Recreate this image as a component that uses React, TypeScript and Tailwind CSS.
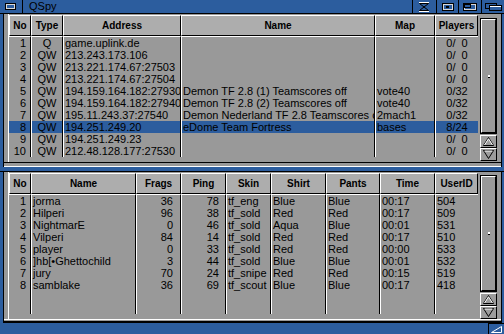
import React from "react"

type Col = { title: string; w: string; cell: string }

const serverCols: Col[] = [
  { title: "No", w: "w-[22px]", cell: "text-right pr-[4px]" },
  { title: "Type", w: "w-[32px]", cell: "text-center" },
  { title: "Address", w: "w-[118px]", cell: "pl-[1px]" },
  { title: "Name", w: "w-[194px]", cell: "pl-[1px]" },
  { title: "Map", w: "w-[60px]", cell: "pl-[1px]" },
  { title: "Players", w: "w-[43px]", cell: "text-center" },
]

const F = "\u2007"

const servers: string[][] = [
  ["1", "Q", "game.uplink.de", "", "", `0/${F}0`],
  ["2", "QW", "213.243.173.106", "", "", `0/${F}0`],
  ["3", "QW", "213.221.174.67:27503", "", "", `0/${F}0`],
  ["4", "QW", "213.221.174.67:27504", "", "", `0/${F}0`],
  ["5", "QW", "194.159.164.182:27930", "Demon TF 2.8 (1) Teamscores off", "vote40", "0/32"],
  ["6", "QW", "194.159.164.182:27940", "Demon TF 2.8 (2) Teamscores off", "vote40", "0/32"],
  ["7", "QW", "195.11.243.37:27540", "Demon Nederland TF 2.8 Teamscores off", "2mach1", "0/32"],
  ["8", "QW", "194.251.249.20", "eDome Team Fortress", "bases", "8/24"],
  ["9", "QW", "194.251.249.23", "", "", `0/${F}0`],
  ["10", "QW", "212.48.128.177:27530", "", "", `0/${F}0`],
]

const playerCols: Col[] = [
  { title: "No", w: "w-[22px]", cell: "text-right pr-[4px]" },
  { title: "Name", w: "w-[105px]", cell: "pl-[1px]" },
  { title: "Frags", w: "w-[45px]", cell: "text-right pr-[7px]" },
  { title: "Ping", w: "w-[45px]", cell: "text-right pr-[6px]" },
  { title: "Skin", w: "w-[45px]", cell: "pl-[1px]" },
  { title: "Shirt", w: "w-[55px]", cell: "pl-[1px]" },
  { title: "Pants", w: "w-[54px]", cell: "pl-[1px]" },
  { title: "Time", w: "w-[55px]", cell: "pl-[1px]" },
  { title: "UserID", w: "w-[43px]", cell: "pl-[1px]" },
]

const players: string[][] = [
  ["1", "jorma", "36", "78", "tf_eng", "Blue", "Blue", "00:17", "504"],
  ["2", "Hilperi", "96", "38", "tf_sold", "Red", "Red", "00:17", "509"],
  ["3", "NightmarE", "0", "46", "tf_sold", "Aqua", "Blue", "00:01", "531"],
  ["4", "Vilperi", "84", "14", "tf_sold", "Red", "Red", "00:17", "510"],
  ["5", "player", "0", "33", "tf_sold", "Red", "Red", "00:00", "533"],
  ["6", "]hb[\u2022Ghettochild", "3", "44", "tf_sold", "Blue", "Blue", "00:01", "532"],
  ["7", "jury", "70", "24", "tf_snipe", "Red", "Red", "00:15", "519"],
  ["8", "samblake", "36", "69", "tf_scout", "Blue", "Blue", "00:17", "418"],
]

function List({
  cols,
  rows,
  selected,
  height,
}: {
  cols: Col[]
  rows: string[][]
  selected?: number
  height: string
}) {
  return (
    <div className={`flex ${height}`}>
      {cols.map((c, ci) => {
        const first = ci === 0
        const last = ci === cols.length - 1
        return (
          <div key={c.title} className={`flex flex-col shrink-0 ${c.w}`}>
            <div className="h-[21px] shrink-0 bg-[#adadad] border border-t-white border-l-white border-r-black border-b-black text-center text-[10px] font-bold leading-[19px] overflow-hidden whitespace-nowrap">
              {c.title}
            </div>
            <div
              className={`flex-1 flex flex-col border-t border-t-white ${
                last ? "" : "border-r border-r-black"
              } ${first ? "" : "border-l border-l-white"}`}
            >
              {rows.map((r, ri) => (
                <div
                  key={ri}
                  className={`h-[12px] leading-[12px] whitespace-pre overflow-hidden ${c.cell} ${
                    ri === selected ? "bg-[#2c5d9e]" : ""
                  }`}
                >
                  {r[ci]}
                </div>
              ))}
            </div>
          </div>
        )
      })}
    </div>
  )
}

function ArrowButton({ up }: { up?: boolean }) {
  return (
    <div className="h-[13px] shrink-0 border border-t-white border-l-white border-r-black border-b-black bg-[#9c9c9c] flex items-center justify-center">
      <svg width="13" height="11" viewBox="0 0 13 11">
        {up ? (
          <>
            <path d="M1.5 9.5 L6.5 1.5 L11.5 9.5 Z" fill="none" stroke="black" />
            <path d="M2.5 9 L6.5 2.8 L10.5 9" fill="none" stroke="white" />
          </>
        ) : (
          <>
            <path d="M1.5 1.5 L6.5 9.5 L11.5 1.5 Z" fill="none" stroke="black" />
            <path d="M2.5 2 L10.5 2" fill="none" stroke="white" />
          </>
        )}
      </svg>
    </div>
  )
}

function Scroller({ mt, track }: { mt: string; track: string }) {
  return (
    <div className="w-[17px] ml-[2px] flex flex-col shrink-0">
      <div className={`${mt} ${track} shrink-0 border border-black`}>
        <div className="h-full border border-t-white border-l-white border-r-black border-b-black bg-[#999999] flex items-center justify-center">
          <div className="flex flex-col">
            <div className="w-[2px] h-[2px] bg-white" />
            <div className="w-[2px] h-[1px] bg-black" />
          </div>
        </div>
      </div>
      <div className="h-[1px] shrink-0" />
      <ArrowButton up />
      <ArrowButton />
    </div>
  )
}

function TitleBar() {
  return (
    <div className="h-[14px] shrink-0 flex border-b border-black bg-[#2c5d9e]">
      <div className="w-[23px] border-r border-black flex items-center justify-center">
        <svg width="22" height="13" viewBox="0 0 22 13">
          <rect x="5.5" y="3.5" width="10" height="6" fill="none" stroke="black" />
          <rect x="6.5" y="4.5" width="8" height="4" fill="none" stroke="#d8d8d8" />
        </svg>
      </div>
      <div className="pl-[6px] text-[11px] leading-[13px] text-black">QSpy</div>
      <div className="flex-1" />
      <div className="w-[24px] border-l border-black flex items-center justify-center">
        <svg width="23" height="13" viewBox="0 0 23 13">
          <path d="M6 2.5 H16" stroke="white" />
          <path d="M6.5 3.5 H15.5 L11 7 L15.5 10.5 H6.5 L11 7 Z" fill="none" stroke="black" />
          <path d="M6 11.5 H16" stroke="white" />
        </svg>
      </div>
      <div className="w-[22px] border-l border-black flex items-center justify-center">
        <svg width="21" height="13" viewBox="0 0 21 13">
          <rect x="5.5" y="3.5" width="11" height="7" fill="none" stroke="black" />
          <rect x="6.5" y="4.5" width="9" height="5" fill="none" stroke="#d8d8d8" />
          <rect x="9" y="6" width="3" height="2" fill="black" />
        </svg>
      </div>
      <div className="w-[23px] border-l border-black flex items-center justify-center">
        <svg width="22" height="13" viewBox="0 0 22 13">
          <rect x="4.5" y="3.5" width="13" height="7" fill="none" stroke="black" />
          <rect x="5.5" y="4.5" width="11" height="5" fill="none" stroke="#d8d8d8" />
          <rect x="5.5" y="4.5" width="6" height="3" fill="none" stroke="black" />
        </svg>
      </div>
      <div className="w-[23px] border-l border-black flex items-center justify-center">
        <svg width="22" height="13" viewBox="0 0 22 13">
          <rect x="3.5" y="3.5" width="11" height="5" fill="none" stroke="black" />
          <rect x="7.5" y="5.5" width="12" height="5" fill="#2c5d9e" stroke="black" />
          <path d="M8 6.5 H19" stroke="white" />
        </svg>
      </div>
    </div>
  )
}

export default function App() {
  return (
    <div className="w-[504px] h-[334px] bg-[#2c5d9e] flex flex-col overflow-hidden font-['Liberation_Sans',Arial,sans-serif] text-[11px] text-black">
      <TitleBar />

      <div className="h-[153px] shrink-0 ml-[3px] mr-[2px] border-x border-black bg-[#999999] flex flex-col">
        <div className="h-[149px] shrink-0 border-b border-black flex">
          <div className="ml-[4px] border-l border-white">
            <div className="pt-[1px]">
              <List cols={serverCols} rows={servers} selected={7} height="h-[142px]" />
            </div>
          </div>
          <Scroller mt="mt-[4px]" track="h-[116px]" />
        </div>
        <div className="flex-1 border-b border-white" />
      </div>

      <div className="h-[4px] shrink-0" />
      <div className="h-[1px] shrink-0 bg-black" />

      <div className="h-[151px] shrink-0 ml-[3px] mr-[2px] border-x border-black bg-[#999999] flex flex-col">
        <div className="h-[148px] shrink-0 border-b border-white flex">
          <div className="ml-[4px] border-l border-white">
            <div className="pt-[1px]">
              <List cols={playerCols} rows={players} height="h-[141px]" />
            </div>
          </div>
          <Scroller mt="mt-[3px]" track="h-[117px]" />
        </div>
        <div className="h-[1px] shrink-0" />
        <div className="h-[2px] shrink-0 bg-black" />
      </div>

      <div className="flex-1 flex justify-end">
        <div className="w-[16px] border-l border-t border-black flex items-center justify-center">
          <svg width="15" height="10" viewBox="0 0 15 10">
            <path d="M2.5 8.5 L12.5 2.5 V8.5 Z" fill="none" stroke="white" />
          </svg>
        </div>
      </div>
    </div>
  )
}
